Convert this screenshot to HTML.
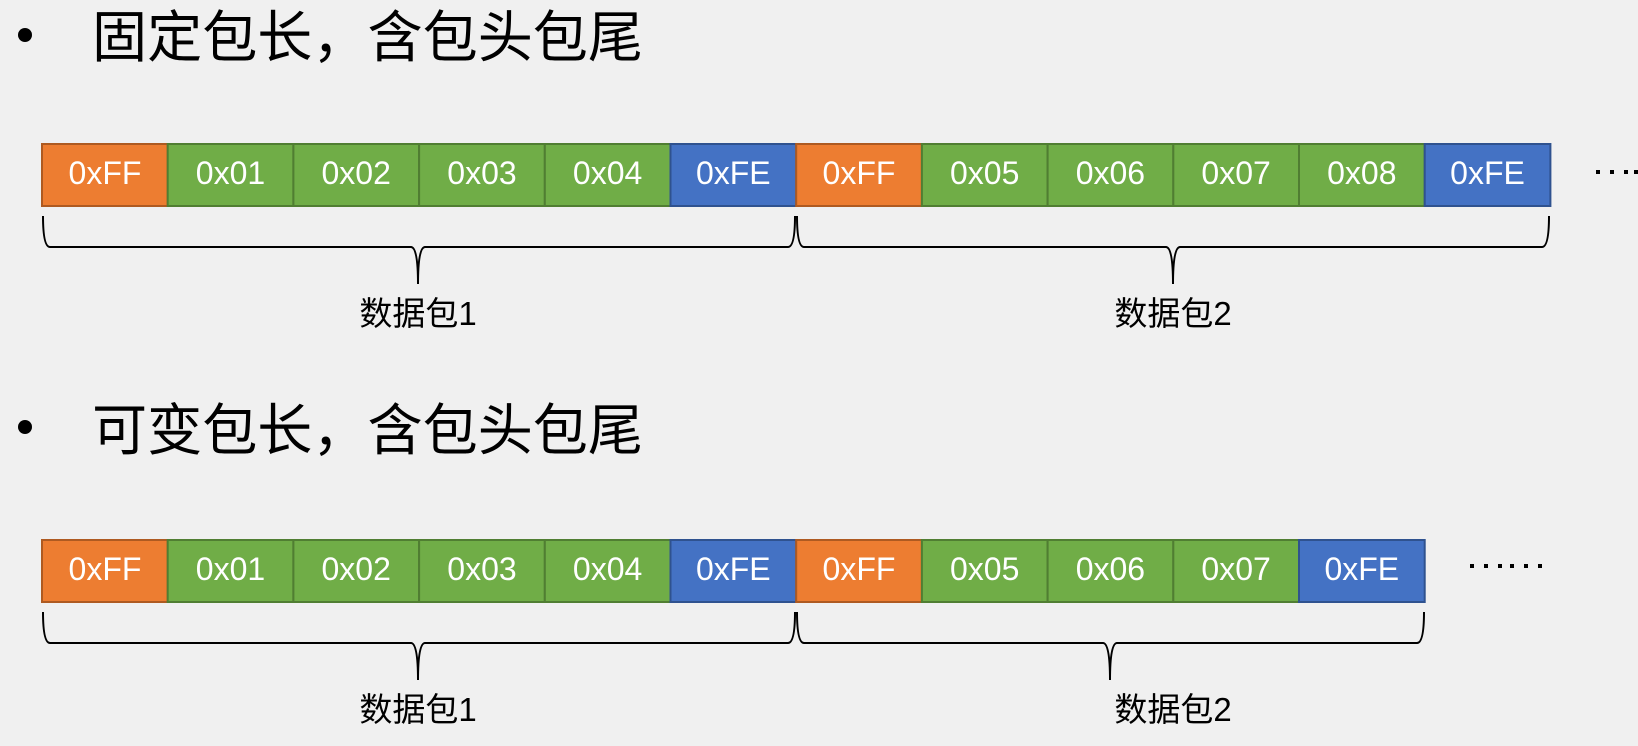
<!DOCTYPE html>
<html><head><meta charset="utf-8"><style>
html,body{margin:0;padding:0;background:#f0f0f0;}
svg{display:block}
</style></head><body>
<svg width="1638" height="746" xmlns="http://www.w3.org/2000/svg">
<rect width="1638" height="746" fill="#f0f0f0"/>
<g font-family="'Liberation Sans','Noto Sans CJK SC',sans-serif" fill="#000">
<circle cx="25" cy="35" r="7"/>
<text x="92" y="57" font-size="56" textLength="551" lengthAdjust="spacingAndGlyphs" font-family="'Noto Sans CJK SC',sans-serif">固定包长，含包头包尾</text>
<circle cx="25" cy="427" r="7"/>
<text x="92" y="450" font-size="56" textLength="551" lengthAdjust="spacingAndGlyphs" font-family="'Noto Sans CJK SC',sans-serif">可变包长，含包头包尾</text>
</g>
<g stroke-width="2" font-family="'Liberation Sans',sans-serif" font-size="32" fill="#fff" text-anchor="middle">
<g>
<rect x="42" y="144" width="125.7" height="62" fill="#ED7D31" stroke="#AE5A21"/>
<rect x="167.7" y="144" width="125.7" height="62" fill="#70AD47" stroke="#507E32"/>
<rect x="293.4" y="144" width="125.7" height="62" fill="#70AD47" stroke="#507E32"/>
<rect x="419.1" y="144" width="125.7" height="62" fill="#70AD47" stroke="#507E32"/>
<rect x="544.8" y="144" width="125.7" height="62" fill="#70AD47" stroke="#507E32"/>
<rect x="670.5" y="144" width="125.7" height="62" fill="#4472C4" stroke="#2F528F"/>
<rect x="796.2" y="144" width="125.7" height="62" fill="#ED7D31" stroke="#AE5A21"/>
<rect x="921.9" y="144" width="125.7" height="62" fill="#70AD47" stroke="#507E32"/>
<rect x="1047.6" y="144" width="125.7" height="62" fill="#70AD47" stroke="#507E32"/>
<rect x="1173.3" y="144" width="125.7" height="62" fill="#70AD47" stroke="#507E32"/>
<rect x="1299" y="144" width="125.7" height="62" fill="#70AD47" stroke="#507E32"/>
<rect x="1424.7" y="144" width="125.7" height="62" fill="#4472C4" stroke="#2F528F"/>
</g>
<g>
<text x="105" y="184">0xFF</text><text x="230.5" y="184">0x01</text><text x="356.2" y="184">0x02</text><text x="482" y="184">0x03</text><text x="607.6" y="184">0x04</text><text x="733.3" y="184">0xFE</text>
<text x="859" y="184">0xFF</text><text x="984.7" y="184">0x05</text><text x="1110.4" y="184">0x06</text><text x="1236.1" y="184">0x07</text><text x="1361.8" y="184">0x08</text><text x="1487.5" y="184">0xFE</text>
</g>
<g>
<rect x="42" y="540" width="125.7" height="62" fill="#ED7D31" stroke="#AE5A21"/>
<rect x="167.7" y="540" width="125.7" height="62" fill="#70AD47" stroke="#507E32"/>
<rect x="293.4" y="540" width="125.7" height="62" fill="#70AD47" stroke="#507E32"/>
<rect x="419.1" y="540" width="125.7" height="62" fill="#70AD47" stroke="#507E32"/>
<rect x="544.8" y="540" width="125.7" height="62" fill="#70AD47" stroke="#507E32"/>
<rect x="670.5" y="540" width="125.7" height="62" fill="#4472C4" stroke="#2F528F"/>
<rect x="796.2" y="540" width="125.7" height="62" fill="#ED7D31" stroke="#AE5A21"/>
<rect x="921.9" y="540" width="125.7" height="62" fill="#70AD47" stroke="#507E32"/>
<rect x="1047.6" y="540" width="125.7" height="62" fill="#70AD47" stroke="#507E32"/>
<rect x="1173.3" y="540" width="125.7" height="62" fill="#70AD47" stroke="#507E32"/>
<rect x="1299" y="540" width="125.7" height="62" fill="#4472C4" stroke="#2F528F"/>
</g>
<g>
<text x="105" y="580">0xFF</text><text x="230.5" y="580">0x01</text><text x="356.2" y="580">0x02</text><text x="482" y="580">0x03</text><text x="607.6" y="580">0x04</text><text x="733.3" y="580">0xFE</text>
<text x="859" y="580">0xFF</text><text x="984.7" y="580">0x05</text><text x="1110.4" y="580">0x06</text><text x="1236.1" y="580">0x07</text><text x="1361.8" y="580">0xFE</text>
</g>
</g>
<g fill="none" stroke="#000" stroke-width="2">
<path d="M43 216 Q43 247 50 247 L411 247 Q418 247 418 284 Q418 247 425 247 L788 247 Q795 247 795 216"/>
<path d="M797 216 Q797 247 804 247 L1166 247 Q1173 247 1173 284 Q1173 247 1180 247 L1542 247 Q1549 247 1549 216"/>
<path d="M43 612 Q43 643 50 643 L411 643 Q418 643 418 680 Q418 643 425 643 L788 643 Q795 643 795 612"/>
<path d="M797 612 Q797 643 804 643 L1103 643 Q1110 643 1110 680 Q1110 643 1117 643 L1417 643 Q1424 643 1424 612"/>
</g>
<g fill="#000">
<rect x="1596" y="170" width="4" height="4"/><rect x="1610" y="170" width="4" height="4"/><rect x="1624" y="170" width="4" height="4"/><rect x="1634" y="170" width="4" height="4"/>
<rect x="1470" y="564" width="4" height="4"/><rect x="1484" y="564" width="4" height="4"/><rect x="1498" y="564" width="4" height="4"/><rect x="1510" y="564" width="4" height="4"/><rect x="1524" y="564" width="4" height="4"/><rect x="1538" y="564" width="4" height="4"/>
</g>
<g font-family="'Liberation Sans','Noto Sans CJK SC',sans-serif" font-size="33" fill="#000" text-anchor="middle">
<text x="418" y="325">数据包1</text>
<text x="1173" y="325">数据包2</text>
<text x="418" y="721">数据包1</text>
<text x="1173" y="721">数据包2</text>
</g>
</svg>
</body></html>
